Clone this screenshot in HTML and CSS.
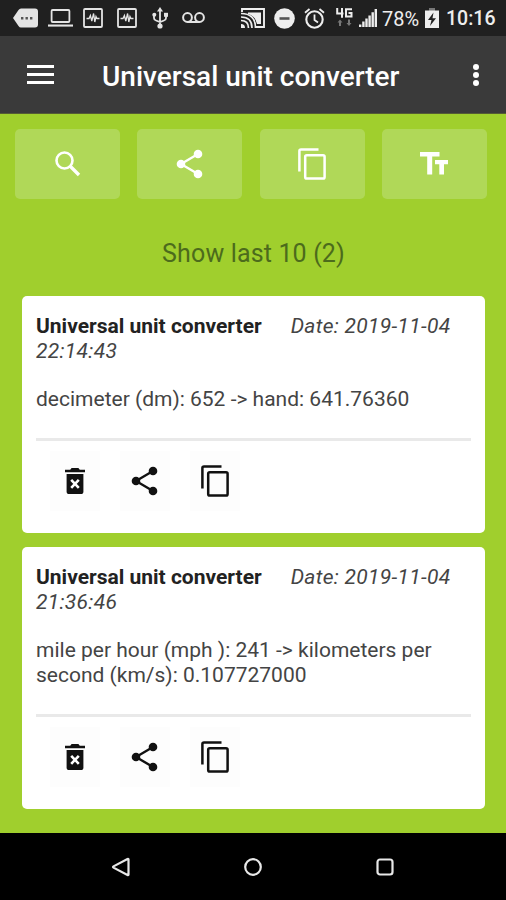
FILE: index.html
```html
<!DOCTYPE html>
<html lang="en">
<head>
    <meta charset="utf-8">
    <title>Universal unit converter</title>
    <link rel="stylesheet" href="styles.css">
</head>
<body>
<svg class="symbols">
    <symbol id="share" viewBox="0 0 28 30">
        <path d="M5 15L22 5M5 15L22 25" fill="none" stroke="currentColor" stroke-width="2.4"/>
        <circle cx="5" cy="15" r="4.3"/><circle cx="22" cy="5" r="4.3"/><circle cx="22" cy="25" r="4.3"/>
    </symbol>
    <symbol id="copy" viewBox="0 0 28 32">
        <path d="M1.4 23.5V3Q1.4 1.4 3 1.4H20.5" fill="none" stroke="currentColor" stroke-width="2.5"/>
        <rect x="7.2" y="7.2" width="19.4" height="23.4" rx="1.6" fill="none" stroke="currentColor" stroke-width="2.5"/>
    </symbol>
    <symbol id="trash" viewBox="0 0 20 26">
        <path d="M0 1.7H5.2L6.6 0H13.4L14.8 1.7H20V4.3H0Z"/>
        <path d="M1.6 6H18.4V23.4Q18.4 26 15.8 26H4.2Q1.6 26 1.6 23.4Z"/>
        <path d="M6.2 11.8L13.8 19.8M13.8 11.8L6.2 19.8" stroke="#fff" stroke-width="2.6"/>
    </symbol>
    <symbol id="wave" viewBox="0 0 20 20">
        <rect x="1" y="1" width="18" height="18" rx="1" fill="none" stroke="currentColor" stroke-width="1.8"/>
        <path d="M3.5 10.5H6L7.4 7.5L8.8 13L10.6 5.5L11.8 14L13 8.5L14 10.5H16.5" fill="none" stroke="currentColor" stroke-width="1.3"/>
    </symbol>
</svg>
<div class="status-bar">
    <div class="notices">
        <svg width="25" height="20" viewBox="0 0 25 20"><path d="M8 .5H22Q25 .5 25 3.5V16.500Q25 19.500 22 19.500H8Q6.500 19.500 5.500 18L0 10L5.500 2Q6.500 .5 8 .5Z"/><path d="M8 9h2.400v2.400H8zM12.500 9h2.400v2.400h-2.400zM17 9h2.400v2.400H17z" fill="#555"/></svg>
        <svg width="25" height="18" viewBox="0 0 25 18"><rect x="3.600" y="1" width="17.800" height="12" rx="1" fill="none" stroke="currentColor" stroke-width="1.800"/><path d="M0 15.500H25V17.600H0z"/></svg>
        <svg width="20" height="20"><use href="#wave"/></svg>
        <svg width="20" height="20"><use href="#wave"/></svg>
        <svg class="usb" width="16" height="22" viewBox="0 0 16 22"><path d="M8 3V18M2 8V11Q2 13 4 13.500L8 15L12 13.500Q14 13 14 11V8" fill="none" stroke="currentColor" stroke-width="1.800"/><path d="M8 0L11 4.500H5Z"/><circle cx="8" cy="19" r="2.600"/><circle cx="2.300" cy="7.700" r="2"/><path d="M12 5.800h4v4h-4z"/></svg>
        <svg class="voicemail" width="23" height="12" viewBox="0 0 23 12"><circle cx="5.500" cy="5.500" r="4.400" fill="none" stroke="currentColor" stroke-width="2"/><circle cx="17.500" cy="5.500" r="4.400" fill="none" stroke="currentColor" stroke-width="2"/><path d="M5.500 9h12v2h-12z"/></svg>
    </div>
    <div class="system">
        <svg width="24" height="20" viewBox="0 0 24 20"><path d="M1 4V1H23V19H15" fill="none" stroke="currentColor" stroke-width="1.900"/><path d="M0 16Q4 16 4 20H0z"/><path d="M0 12.500Q7.500 12.500 7.500 20M0 9Q11 9 11 20M0 5.500Q14.500 5.500 14.500 20" fill="none" stroke="currentColor" stroke-width="1.700"/><path d="M7 4.500H20V16H16Q14.500 8 7 6z"/></svg>
        <svg class="dnd" width="21" height="21" viewBox="0 0 21 21"><circle cx="10.500" cy="10.500" r="10.300"/><path d="M5.500 9.200h10v2.600h-10z" fill="#555"/></svg>
        <svg class="alarm" width="21" height="21" viewBox="0 0 21 21"><circle cx="10.500" cy="11.500" r="8.200" fill="none" stroke="currentColor" stroke-width="2.100"/><path d="M1 4.800L5.500 1M20 4.800L15.500 1M10.500 6.500V12L14 14.500" fill="none" stroke="currentColor" stroke-width="1.800"/></svg>
        <div class="network">
            <svg width="17" height="20" viewBox="0 0 17 20"><path d="M1.200 0V5.500H7.500M6 0V9.800M16 1.200H10V8.500H15.500V5H12.500" fill="none" stroke="currentColor" stroke-width="2"/><path d="M4 11.500L6.500 14.500H5V18H3V14.500H1.500zM13 18L10.500 15H12V11.500H14V15H15.500z" fill="#777"/></svg>
        </div>
        <svg class="signal" width="18" height="18" viewBox="0 0 18 18"><path d="M0 15.500h2.400V18H0zM3.200 12.500h2.400V18H3.200zM6.300 9.500h2.400V18H6.300zM9.400 6.500h2.400V18H9.400zM12.500 3.300h2.400V18h-2.400zM15.600 0H18V18h-2.400z"/></svg>
        <span class="percent">78%</span>
        <svg class="battery" width="14" height="20" viewBox="0 0 14 20"><path d="M4 0h6v3H4z" fill="#777"/><path d="M0 2.500H14V20H0z"/><path d="M8.500 4.500L3 12H6.500L5 18L11 10.300H7.500z" fill="#222"/></svg>
        <span class="clock">10:16</span>
    </div>
</div>
<div class="app-bar">
    <div class="menu"><i></i><i></i><i></i></div>
    <h1>Universal unit converter</h1>
    <div class="more"><i></i><i></i><i></i></div>
</div>
<div class="content">
    <div class="toolbar">
        <div class="btn"><svg width="26" height="26" viewBox="0 0 26 26"><circle cx="9.500" cy="9.500" r="8" fill="none" stroke="currentColor" stroke-width="2.600"/><path d="M15 15L24 24" stroke="currentColor" stroke-width="3.400"/></svg></div>
        <div class="btn"><svg width="28" height="30"><use href="#share"/></svg></div>
        <div class="btn"><svg width="28" height="32"><use href="#copy"/></svg></div>
        <div class="btn"><svg width="28" height="23" viewBox="0 0 28 23"><path d="M0 0H19.500V4.500H12.200V22.500H7.200V4.500H0zM15 8H28V12.300H24V22.500H19.300V12.300H15z"/></svg></div>
    </div>
    <div class="show-last">Show last 10 (2)</div>
    <div class="card">
        <div class="info"><b>Universal unit converter</b><em class="date">Date: 2019-11-04</em><br><em>22:14:43</em></div>
        <div class="result">decimeter (dm): 652 -&gt; hand: 641.76360</div>
        <div class="actions">
            <div class="action"><svg width="20" height="26"><use href="#trash"/></svg></div>
            <div class="action"><svg width="28" height="30"><use href="#share"/></svg></div>
            <div class="action"><svg width="28" height="32"><use href="#copy"/></svg></div>
        </div>
    </div>
    <div class="card">
        <div class="info"><b>Universal unit converter</b><em class="date">Date: 2019-11-04</em><br><em>21:36:46</em></div>
        <div class="result">mile per hour (mph ): 241 -&gt; kilometers per<br>second (km/s): 0.107727000</div>
        <div class="actions">
            <div class="action"><svg width="20" height="26"><use href="#trash"/></svg></div>
            <div class="action"><svg width="28" height="30"><use href="#share"/></svg></div>
            <div class="action"><svg width="28" height="32"><use href="#copy"/></svg></div>
        </div>
    </div>
</div>
<div class="nav-bar">
    <svg width="20" height="20" viewBox="0 0 20 20"><path d="M17.500 2.500V17.500Q17.500 18.500 16.500 18L2.500 10.600Q1.500 10 2.500 9.400L16.500 2Q17.500 1.500 17.500 2.500Z"/></svg>
    <svg width="20" height="20" viewBox="0 0 20 20"><circle cx="10" cy="10" r="7.800"/></svg>
    <svg width="20" height="20" viewBox="0 0 20 20"><rect x="2.500" y="2.500" width="15" height="15" rx="2.500"/></svg>
</div>
</body>
</html>
```
FILE: styles.css
```css
*{
    box-sizing: border-box;
}
body{
    margin: 0;
    width: 506px;
    height: 900px;
    overflow: hidden;
    display: flex;
    flex-direction: column;
    background: #a0cf2d;
    font-family: Roboto, "Liberation Sans", sans-serif;
}
svg{
    display: block;
    flex: none;
    fill: currentColor;
}
.symbols{
    display: none;
}
.status-bar{
    height: 36px;
    flex: none;
    padding: 0 10px 0 13px;
    display: flex;
    justify-content: space-between;
    align-items: center;
    background: #202020;
    color: #eee;
}
.notices, .system{
    display: flex;
    align-items: center;
}
.notices{
    gap: 10px;
    color: #e4e4e4;
}
.notices svg + svg + svg + svg{
    margin-left: 4px;
}
.notices .usb{
    margin-left: 5px;
}
.system svg{
    margin-right: 9px;
}
.system .alarm{
    margin-right: 11px;
}
.system .network svg{
    margin-right: 6px;
}
.system .signal{
    margin-right: 5px;
}
.system .battery{
    margin: 0 7px 0 6px;
}
.percent, .clock{
    padding-top: 2px;
    font-size: 20px;
    font-weight: 500;
    line-height: 34px;
    white-space: nowrap;
}
.percent{
    width: 37px;
    font-weight: 400;
}
.clock{
    width: 50px;
    font-size: 19.5px;
}
.app-bar{
    height: 78px;
    flex: none;
    padding: 0 27px;
    display: flex;
    align-items: center;
    background: #3a3a3a;
    border-bottom: 1px solid #555c35;
    color: #fff;
}
.app-bar h1{
    margin: 4px 0 0 48px;
    flex: 1;
    font-size: 28px;
    font-weight: 500;
    white-space: nowrap;
}
.menu{
    width: 27px;
    display: grid;
    gap: 5px;
}
.menu i{
    height: 3px;
    background: #fff;
}
.more{
    display: grid;
    gap: 2px;
}
.more i{
    width: 6px;
    height: 6px;
    border-radius: 50%;
    background: #fff;
}
.content{
    flex: 1;
    padding: 15px 21px 0 22px;
}
.toolbar{
    margin: 0 -2px 0 -7px;
    display: grid;
    grid-template-columns: repeat(4, 105px);
    justify-content: space-between;
}
.btn{
    height: 70px;
    display: flex;
    align-items: center;
    justify-content: center;
    border-radius: 5px;
    background: #b0d858;
    color: #fff;
}
.btn:last-child svg{
    margin-bottom: 1px;
}
.show-last{
    padding: 39px 0 27px;
    font-size: 25px;
    line-height: 31px;
    letter-spacing: .15px;
    text-align: center;
    color: #4c6b1c;
}
.card{
    margin-bottom: 14px;
    padding: 18px 14px 20px;
    border-radius: 5px;
    background: #fff;
    color: #444;
    font-size: 21px;
    line-height: 25px;
    white-space: nowrap;
}
.card b{
    font-weight: 700;
    color: #222;
}
.card em{
    letter-spacing: .3px;
}
.date{
    margin-left: 29px;
}
.result{
    margin: 23px 0 26px;
}
.actions{
    padding: 10px 14px 2px;
    display: flex;
    gap: 20px;
    border-top: 3px solid #e9e9e9;
    color: #111;
}
.action{
    width: 50px;
    height: 60px;
    display: flex;
    align-items: center;
    justify-content: center;
    background: #fdfdfd;
}
.nav-bar{
    height: 67px;
    flex: none;
    padding: 0 111px;
    display: flex;
    align-items: center;
    justify-content: space-between;
    background: #000;
}
.nav-bar svg{
    fill: none;
    stroke: #e8e8e8;
    stroke-width: 2.2;
}
```
